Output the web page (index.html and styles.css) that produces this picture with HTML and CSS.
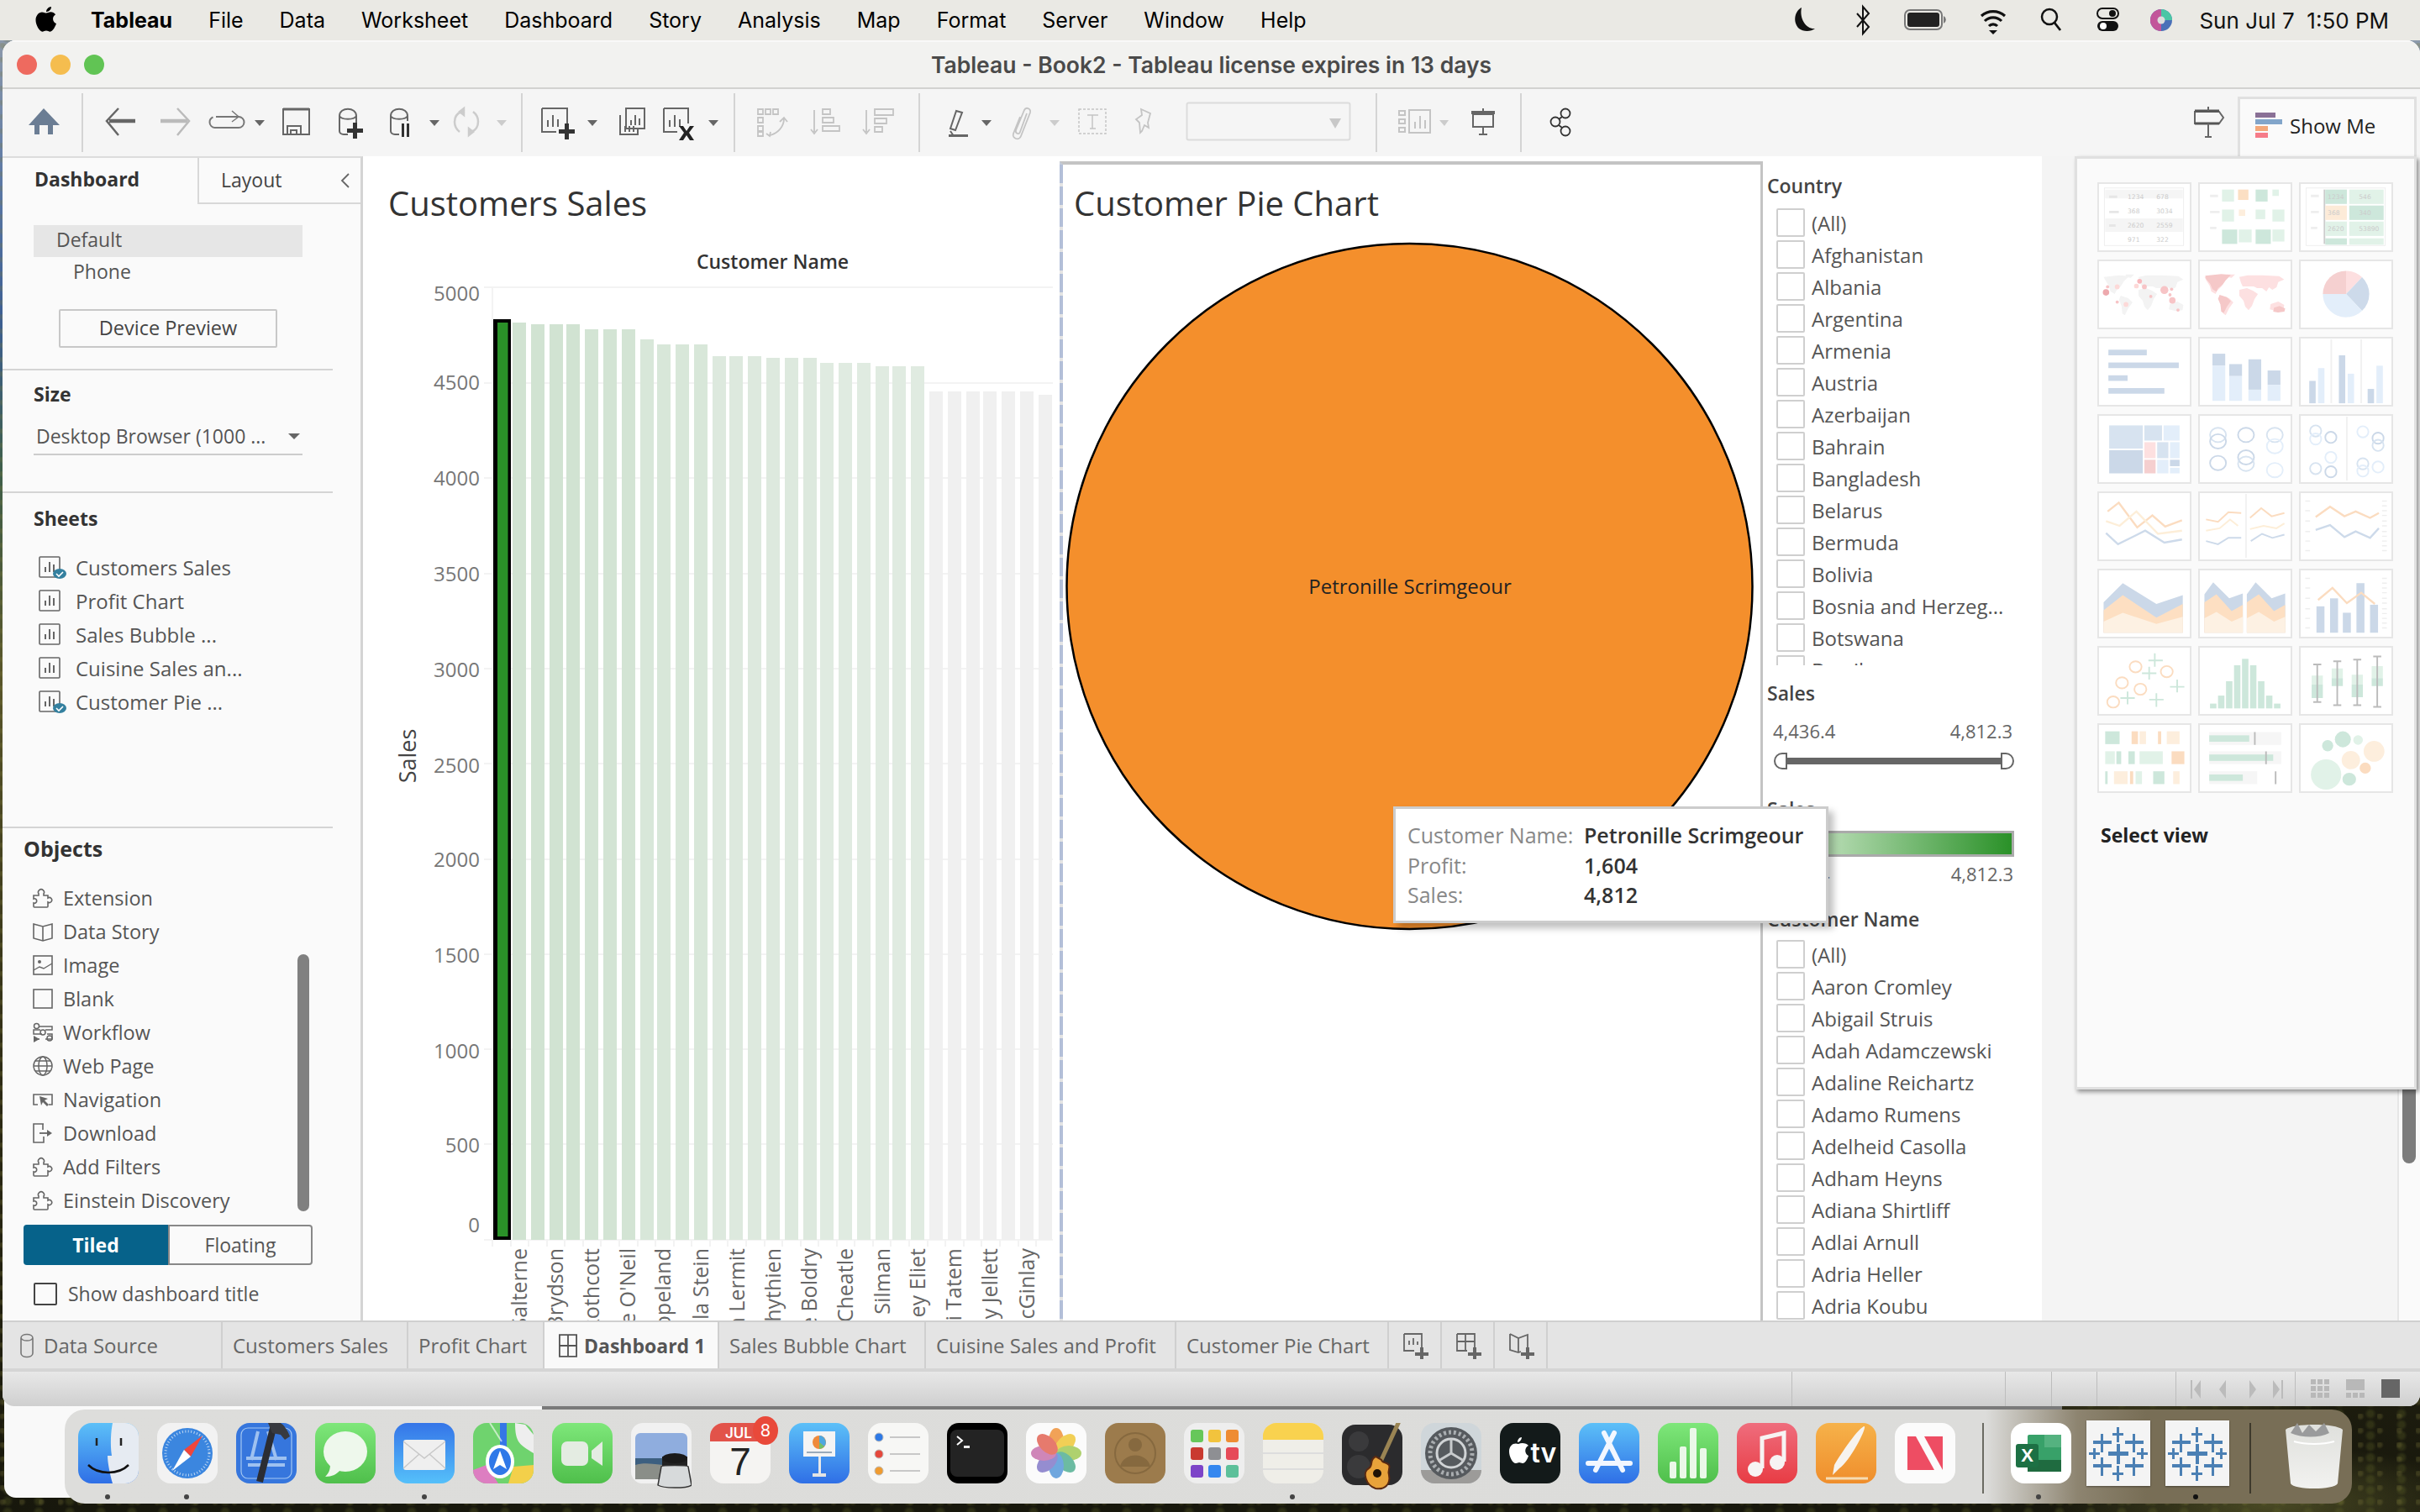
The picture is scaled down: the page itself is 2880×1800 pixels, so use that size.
FILE: index.html
```html
<!DOCTYPE html>
<html lang="en">
<head>
<meta charset="utf-8">
<title>Tableau - Book2</title>
<link rel="stylesheet" href="styles.css">
</head>
<body>
<svg class="defs" width="0" height="0" aria-hidden="true">
  <defs>
    <linearGradient id="gBlue" x1="0" y1="0" x2="0" y2="1"><stop offset="0" stop-color="#5cc0f8"/><stop offset="1" stop-color="#2f6fe6"/></linearGradient>
    <linearGradient id="gBlueUp" x1="0" y1="0" x2="0" y2="1"><stop offset="0" stop-color="#3575e8"/><stop offset="1" stop-color="#55c0fa"/></linearGradient>
    <linearGradient id="gGreen" x1="0" y1="0" x2="0" y2="1"><stop offset="0" stop-color="#7ee77a"/><stop offset="1" stop-color="#4fbf4b"/></linearGradient>
    <linearGradient id="gRed" x1="0" y1="0" x2="0" y2="1"><stop offset="0" stop-color="#ef6d7d"/><stop offset="1" stop-color="#e83c44"/></linearGradient>
    <linearGradient id="gOrange" x1="0" y1="0" x2="0" y2="1"><stop offset="0" stop-color="#f6b24a"/><stop offset="1" stop-color="#ef8e2c"/></linearGradient>
    <linearGradient id="gGlass" x1="0" y1="0" x2="0" y2="1"><stop offset="0" stop-color="#dfe0dc"/><stop offset="1" stop-color="#f2f2f0"/></linearGradient>
    <symbol id="sheet" viewBox="0 0 26 26"><rect x="1" y="1" width="24" height="24" fill="none" stroke="#666" stroke-width="1.6" rx="1"/><path d="M8 19v-6M13 19V7M18 19v-9" stroke="#666" stroke-width="2" fill="none"/></symbol>
    <symbol id="puzzle" viewBox="0 0 24 24"><path d="M1 9h6V7a3.5 3.5 0 1 1 6 0v2h5v3a3 3 0 1 1 0 5v5a1 1 0 0 1-1 1H2a1 1 0 0 1-1-1v-4a2.700 2.700 0 1 0 0-5z" fill="none" stroke="#666" stroke-width="1.6"/></symbol>
    <symbol id="cross" viewBox="0 0 76 78"><g fill="#4b80b4"><rect x="36" y="8" width="3" height="18"/><rect x="31" y="15" width="13" height="3"/><rect x="36" y="54" width="3" height="18"/><rect x="31" y="62" width="13" height="3"/><rect x="36" y="28" width="4" height="24"/><rect x="26" y="37" width="24" height="5"/><rect x="17" y="16" width="3" height="22"/><rect x="8" y="24" width="22" height="4"/><rect x="55" y="16" width="3" height="22"/><rect x="46" y="24" width="22" height="4"/><rect x="17" y="44" width="3" height="22"/><rect x="8" y="52" width="22" height="4"/><rect x="55" y="44" width="3" height="22"/><rect x="46" y="52" width="22" height="4"/><rect x="8" y="33" width="3" height="13"/><rect x="3" y="38" width="13" height="3"/><rect x="65" y="33" width="3" height="13"/><rect x="60" y="38" width="13" height="3"/></g></symbol>
    <symbol id="world" viewBox="0 0 100 50"><path d="M2 4l18-2 12 1-6 6-4 6-5 5-2 4-5-3-2-7-4-6zM28 1h10l-4 4-6-1zM22 26l9 3 5 5-5 7-4 8-3-2-1-9-3-7zM43 4l10-2 17 0 20 1 6 4-7 3-2 6-5 3-4-3-3 5-5-4-6 0-4-2-6 0-7 0-2-4zM43 19l9-2 7 3 6 4-4 6-3 8-4 5-4-4-2-7-5-6zM80 36l9-3 7 4-1 6-8 1-8-2z"/></symbol>
  </defs>
</svg>

<div class="desktop">
  <div class="behind"><div class="behind-line"></div></div>

  <header class="menubar">
    <svg class="apple" viewBox="0 0 28 32" aria-hidden="true"><path d="M20 1c.2 3-2.700 6.300-6 6 0-3 3-6 6-6zM14 8.600c1.500 0 3-1.300 5.500-1.300 2 0 4.200 1 5.600 3-4.500 2.600-3.800 9 .9 10.800-1 3-4 9.600-7.400 9.600-1.700 0-2.600-1.100-4.600-1.100s-3 1.100-4.600 1.100C6 30.700 1.500 22.700 1.500 17c0-5.500 3.600-9.600 7.500-9.600 2.200 0 3.600 1.200 5 1.200z" fill="#000"/></svg>
    <nav class="menu">
      <span class="menu-app">Tableau</span><span>File</span><span>Data</span><span>Worksheet</span><span>Dashboard</span><span>Story</span><span>Analysis</span><span>Map</span><span>Format</span><span>Server</span><span>Window</span><span>Help</span>
    </nav>
    <svg class="status-icons" viewBox="2120 0 480 48" aria-hidden="true">
      <path d="M2144 9c-8 4-11 17-3 25 5 4 14 4 19 0-10 1-19-11-16-25z" fill="#111"/>
      <path d="M2210 16l14 16-7 8V8l7 8-14 16" fill="none" stroke="#111" stroke-width="2"/>
      <rect x="2267" y="12" width="44" height="23" rx="6" fill="none" stroke="#777" stroke-width="2"/><rect x="2270" y="15" width="38" height="17" rx="3" fill="#222"/><path d="M2313 19v9a5 5 0 0 0 0-9z" fill="#777"/>
      <path d="M2358 19a21 21 0 0 1 28 0M2362 25a14 14 0 0 1 20 0M2367 31a7 7 0 0 1 10 0" fill="none" stroke="#111" stroke-width="3.200"/><path d="M2372 41l-5-5h10z" fill="#111"/>
      <circle cx="2439" cy="20" r="9" fill="none" stroke="#111" stroke-width="2.500"/><path d="M2445 27l7 9" stroke="#111" stroke-width="2.800"/>
      <rect x="2496" y="10" width="25" height="12" rx="6" fill="none" stroke="#111" stroke-width="2"/><circle cx="2514" cy="16" r="4" fill="#111"/><rect x="2496" y="25" width="25" height="12" rx="6" fill="#111"/><circle cx="2503" cy="31" r="4" fill="#fff"/>
      <circle cx="2572" cy="24" r="13" fill="#4a70b8"/><path d="M2572 11a13 13 0 0 1 13 13h-13z" fill="#4bc6a5"/><path d="M2559 24a13 13 0 0 1 13-13v26a13 13 0 0 1-13-13z" fill="#c2559a"/><circle cx="2572" cy="24" r="4.500" fill="#ddd"/>
    </svg>
    <span class="clock">Sun Jul 7&nbsp; 1:50 PM</span>
  </header>

  <main class="window">
    <div class="titlebar">
      <div class="lights"><i class="light red"></i><i class="light yellow"></i><i class="light green"></i></div>
      <h1 class="title">Tableau - Book2 - Tableau license expires in 13 days</h1>
    </div>

    <div class="toolbar">
      <svg class="tb-group w96" viewBox="3 107 96 79" aria-hidden="true"><path d="M52 130l19 20h-8v11h-6v-11H47v11h-6v-11h-7z" fill="#6b7d94"/></svg>
      <svg class="tb-group w523" viewBox="99 107 523 79" aria-hidden="true">
        <g fill="none" stroke="#666" stroke-width="2.500"><path d="M141 130l-14 15 14 17"/><path d="M130 145h31" stroke-width="4.500"/></g>
        <g fill="none" stroke="#bbb" stroke-width="2.500"><path d="M211 130l14 15-14 17"/><path d="M191 145h32" stroke-width="4.500"/></g>
        <g fill="none" stroke="#777" stroke-width="2"><path d="M257 140h27a6.500 6.500 0 1 1 0 13h-28a6.500 6.500 0 0 1-6.500-6.500c0-3 1.500-5 4-6"/><path d="M276 133l8 7-8 6" stroke-width="1.500"/></g>
        <path d="M303 144h12l-6 7z" fill="#666"/>
        <g fill="none" stroke="#666" stroke-width="2"><path d="M337 131h31v30h-31z"/><path d="M337 131h31" stroke-width="3"/><path d="M342 161v-10h16v10M346 161v-5h7v5"/></g>
        <g fill="none" stroke="#666" stroke-width="2"><path d="M404 139c0-11 20-11 20 0v11M404 139v18c0 2 2 4 5 4h5M404 139c2 5 18 5 20 0"/></g>
        <path d="M420 147h5v7h7v5h-7v7h-5v-7h-7v-5h7z" fill="#333"/>
        <g fill="none" stroke="#666" stroke-width="2"><path d="M465 139c0-11 20-11 20 0v6M465 139v18c0 2 2 4 5 4h5M465 139c2 5 18 5 20 0"/></g>
        <path d="M478 148h3v16h-3zM484 148h3v16h-3z" fill="#333"/>
        <path d="M511 144h12l-6 7z" fill="#666"/>
        <g fill="none" stroke="#ccc" stroke-width="2.500"><path d="M563 134a15 15 0 0 1 6 12M547 158a15 15 0 0 1-6-12c0-6 3-10 8-12"/><path d="M552 130v8l-5-4zM558 162v-8l5 4z" fill="#ccc"/><path d="M569 146c0 6-3 10-8 12"/></g>
        <path d="M591 144h12l-6 7z" fill="#ccc"/>
      </svg>
      <svg class="tb-group w253" viewBox="622 107 253 79" aria-hidden="true">
        <g fill="none" stroke="#666" stroke-width="2"><path d="M645 130h30v20M645 130v28h17"/><path d="M652 152v-8M658 152v-14M664 152v-9"/></g>
        <path d="M672 148h5v7h7v5h-7v7h-5v-7h-7v-5h7z" fill="#333"/>
        <path d="M699 144h12l-6 7z" fill="#666"/>
        <g fill="none" stroke="#666" stroke-width="2"><path d="M745 130h22v24h-22zM738 138v23h21v-7"/><path d="M751 150v-6M756 150v-12M761 150v-8M744 158v-7M749 158v-7M754 158v-7"/></g>
        <g fill="none" stroke="#666" stroke-width="2"><path d="M790 130h29v18M790 130v28h16"/><path d="M797 152v-8M803 152v-14M809 152v-9"/></g>
        <path d="M808 151h5l4 6 4-6h5l-6 8 6 9h-5l-4-6-4 6h-5l6-9z" fill="#222"/>
        <path d="M843 144h12l-6 7z" fill="#666"/>
      </svg>
      <svg class="tb-group w220" viewBox="875 107 220 79" aria-hidden="true">
        <g fill="none" stroke="#c4c4c4" stroke-width="1.800"><path d="M902 131h6v6h-6zM911 131h6v6h-6zM920 131h6v6h-6zM902 141h6v6h-6zM902 151h6v6h-6zM902 158h6v5h-6z"/><path d="M933 142c0 10-7 17-16 20M912 160l4 3 1-5"/><path d="M928 146l5-5 4 5"/></g>
        <g fill="none" stroke="#c4c4c4" stroke-width="1.800"><path d="M969 132v26M965 155l4 5 4-5M979 131h9v6h-9zM979 141h13v6h-13zM979 151h20v6h-20z"/></g>
        <g fill="none" stroke="#c4c4c4" stroke-width="1.800"><path d="M1031 132v26M1027 155l4 5 4-5M1041 131h22v7h-22zM1041 142h14v6h-14zM1041 152h9v6h-9z"/></g>
      </svg>
      <svg class="tb-group w544" viewBox="1095 107 544 79" aria-hidden="true">
        <path d="M1138 133l7 2-8 21-6-2z" fill="none" stroke="#666" stroke-width="2"/><path d="M1131 157l4 6M1129 162h23" stroke="#666" stroke-width="2"/><path d="M1129 161h23v3h-23z" fill="#666"/>
        <path d="M1168 144h12l-6 7z" fill="#666"/>
        <path d="M1222 136l-8 22c-1 4-6 2-5-2l10-24c2-4 8-2 7 3l-11 28c-2 6-11 3-9-3l8-20" fill="none" stroke="#c4c4c4" stroke-width="1.800"/>
        <path d="M1249 144h12l-6 7z" fill="#ccc"/>
        <rect x="1284" y="131" width="32" height="29" fill="none" stroke="#c4c4c4" stroke-width="1.500" stroke-dasharray="3 2"/><path d="M1294 138h13M1300 138v16M1297 154h7" fill="none" stroke="#c4c4c4" stroke-width="1.500"/>
        <path d="M1358 131l11 5-3 11 1 6-5-3-3 7-2 2-1-12-4-4 7-5z" fill="none" stroke="#c4c4c4" stroke-width="1.800"/>
        <rect x="1412.500" y="123.500" width="194" height="44" rx="2" fill="#f5f5f5" stroke="#dcdcdc" stroke-width="2"/>
        <path d="M1582 142h14l-7 12z" fill="#c8c8c8"/>
      </svg>
      <svg class="tb-group w172" viewBox="1639 107 172 79" aria-hidden="true">
        <g fill="none" stroke="#c4c4c4" stroke-width="2"><path d="M1665 133h7v5h-7zM1665 143h7v5h-7zM1665 153h7v5h-7z"/><path d="M1677 132h25v27h-25z"/><path d="M1684 154v-8M1690 154v-15M1696 154v-10"/></g>
        <path d="M1713 144h11l-5 7z" fill="#ccc"/>
        <path d="M1751 133h28v4h-28z" fill="#666"/><path d="M1765 130v3M1765 152v10M1760 161h10" stroke="#666" stroke-width="2"/><path d="M1753 137h24v15h-24z" fill="none" stroke="#666" stroke-width="2"/>
      </svg>
      <svg class="tb-group w60" viewBox="1811 107 60 79" aria-hidden="true"><g fill="none" stroke="#333" stroke-width="1.800"><circle cx="1863" cy="136" r="5.500"/><circle cx="1851" cy="146" r="5.500"/><circle cx="1863" cy="157" r="5.500"/><path d="M1859 140l-4 3M1855 150l4 3"/></g></svg>
      <div class="tb-spacer"></div>
      <svg class="tb-guide" viewBox="0 0 40 40" aria-hidden="true"><path d="M2 6h29l5 7-5 7H2z" fill="none" stroke="#666" stroke-width="2"/><path d="M2 5h29M2 20h29" stroke="#555" stroke-width="3"/><path d="M18 0v5M18 20v16M14 36h8" stroke="#666" stroke-width="2"/></svg>
      <div class="showme-tab">
        <svg class="showme-icon" viewBox="0 0 32 30" aria-hidden="true"><rect width="24" height="6" fill="#8a7096"/><rect y="8" width="32" height="6" fill="#82a5ca"/><rect y="16" width="15" height="6" fill="#f4a87a"/><rect y="24" width="15" height="6" fill="#f67c89"/></svg>
        <span>Show Me</span>
      </div>
    </div>

    <div class="workspace">
      <aside class="sidebar">
        <div class="side-tabs">
          <div class="side-tab active">Dashboard</div>
          <div class="side-tab">Layout<svg class="chev" viewBox="0 0 12 18" aria-hidden="true"><path d="M10 1L2 9l8 8" fill="none" stroke="#666" stroke-width="1.800"/></svg></div>
        </div>
        <section class="sec sec-device">
          <div class="device-row selected">Default</div>
          <div class="device-row indent">Phone</div>
          <div class="device-btn">Device Preview</div>
        </section>
        <section class="sec sec-size">
          <h2 class="sec-title">Size</h2>
          <div class="select"><span>Desktop Browser (1000 ...</span><i class="caret"></i></div>
        </section>
        <section class="sec sec-sheets">
          <h2 class="sec-title">Sheets</h2>
          <ul class="sheet-list">
            <li><span class="sheet-ico"><svg><use href="#sheet"/></svg><svg class="used" viewBox="0 0 16 12" aria-hidden="true"><ellipse cx="8" cy="6" rx="8" ry="6" fill="#34809f"/><path d="M4 6l3 3 5-5" fill="none" stroke="#fff" stroke-width="1.600"/></svg></span>Customers Sales</li>
            <li><span class="sheet-ico"><svg><use href="#sheet"/></svg></span>Profit Chart</li>
            <li><span class="sheet-ico"><svg><use href="#sheet"/></svg></span>Sales Bubble ...</li>
            <li><span class="sheet-ico"><svg><use href="#sheet"/></svg></span>Cuisine Sales an...</li>
            <li><span class="sheet-ico"><svg><use href="#sheet"/></svg><svg class="used" viewBox="0 0 16 12" aria-hidden="true"><ellipse cx="8" cy="6" rx="8" ry="6" fill="#34809f"/><path d="M4 6l3 3 5-5" fill="none" stroke="#fff" stroke-width="1.600"/></svg></span>Customer Pie ...</li>
          </ul>
        </section>
        <section class="sec-objects">
          <h2 class="obj-title">Objects</h2>
          <div class="obj-clip">
            <ul class="obj-list">
              <li><svg viewBox="0 0 24 24"><path d="M12 3L3 22M12 3l9 19" fill="none" stroke="#666" stroke-width="1.600"/></svg>Ask Data</li>
              <li><svg><use href="#puzzle"/></svg>Extension</li>
              <li><svg viewBox="0 0 24 24"><path d="M1 3l11 3 11-3v17l-11 3-11-3zM12 6v17" fill="none" stroke="#666" stroke-width="1.600"/></svg>Data Story</li>
              <li><svg viewBox="0 0 24 24"><rect x="1" y="1" width="22" height="22" fill="none" stroke="#666" stroke-width="1.600"/><circle cx="8" cy="8" r="2" fill="#666"/><path d="M1 18l7-4 5 2 10-6" fill="none" stroke="#666" stroke-width="1.400"/></svg>Image</li>
              <li><svg viewBox="0 0 24 24"><rect x="1" y="1" width="22" height="22" fill="none" stroke="#666" stroke-width="1.600"/></svg>Blank</li>
              <li><svg viewBox="0 0 24 24"><g fill="none" stroke="#666" stroke-width="1.500"><circle cx="4.500" cy="4.500" r="3"/><path d="M8 5h15v4H15M9 9H1v5h10M17 14h6v6h-8M8 20H1"/><circle cx="12" cy="12" r="3"/><circle cx="20" cy="19" r="3"/></g><path d="M1 16l7 4-7 4z" fill="#666"/></svg>Workflow</li>
              <li><svg viewBox="0 0 24 24"><g fill="none" stroke="#666" stroke-width="1.500"><circle cx="12" cy="12" r="11"/><ellipse cx="12" cy="12" rx="5" ry="11"/><path d="M1 12h22M3 6h18M3 18h18"/></g></svg>Web Page</li>
              <li><svg viewBox="0 0 24 24"><path d="M6 18H1V6h22v12h-4" fill="none" stroke="#666" stroke-width="1.600"/><path d="M8 8l10 3-4 2 5 5-2 2-5-5-2 4z" fill="#666"/></svg>Navigation</li>
              <li><svg viewBox="0 0 24 24"><path d="M12 1H1v22h12v-7M13 1l-1 0v7" fill="none" stroke="#666" stroke-width="1.600"/><path d="M8 12h11" stroke="#666" stroke-width="1.800"/><path d="M17 8l6 4-6 4z" fill="#666"/></svg>Download</li>
              <li><svg><use href="#puzzle"/></svg>Add Filters</li>
              <li><svg><use href="#puzzle"/></svg>Einstein Discovery</li>
            </ul>
            <div class="obj-scroll"></div>
          </div>
          <div class="seg"><span class="seg-on">Tiled</span><span class="seg-off">Floating</span></div>
          <label class="show-title"><i class="box-dark"></i>Show dashboard title</label>
        </section>
      </aside>

      <div class="dashboard">
        <section class="sheet-bars">
          <h2 class="viz-title">Customers Sales</h2>
          <div class="field-label">Customer Name</div>
          <svg class="bar-chart" viewBox="432 330 828 1242" role="img">
            <g class="grid">
              <path d="M586 342v1134"/>
              <path d="M576 342h677M576 456h677M576 569h677M576 683h677M576 796h677M576 909h677M576 1023h677M576 1136h677M576 1249h677M576 1362h677M576 1476h677"/>
              <path d="M586 1476v8M608 1476v8M629 1476v8M651 1476v8M672 1476v8M694 1476v8M715 1476v8M737 1476v8M759 1476v8M780 1476v8M802 1476v8M823 1476v8M845 1476v8M866 1476v8M888 1476v8M910 1476v8M931 1476v8M953 1476v8M974 1476v8M996 1476v8M1017 1476v8M1039 1476v8M1060 1476v8M1082 1476v8M1104 1476v8M1125 1476v8M1147 1476v8M1168 1476v8M1190 1476v8M1212 1476v8M1233 1476v8"/>
            </g>
            <rect x="587" y="380" width="21" height="1096" fill="#000"/>
            <rect x="592" y="384" width="12.500" height="1088" fill="#2a9128"/>
            <g fill="#d1e3d2">
              <rect x="610" y="384" width="16" height="1092"/><rect x="632" y="386" width="16" height="1090"/><rect x="654" y="386" width="16" height="1090"/><rect x="674" y="386" width="16" height="1090"/>
            </g>
            <g fill="#d3e4d4">
              <rect x="696" y="392" width="16" height="1084"/><rect x="718" y="392" width="16" height="1084"/><rect x="740" y="392" width="16" height="1084"/>
            </g>
            <g fill="#d8e7d9">
              <rect x="762" y="404" width="16" height="1072"/><rect x="782" y="410" width="16" height="1066"/><rect x="804" y="410" width="16" height="1066"/><rect x="826" y="410" width="16" height="1066"/>
            </g>
            <g fill="#dde9de">
              <rect x="848" y="424" width="16" height="1052"/><rect x="868" y="424" width="16" height="1052"/><rect x="890" y="424" width="16" height="1052"/><rect x="912" y="426" width="16" height="1050"/><rect x="934" y="426" width="16" height="1050"/><rect x="956" y="426" width="16" height="1050"/>
            </g>
            <g fill="#e0ebe1">
              <rect x="976" y="432" width="16" height="1044"/><rect x="998" y="432" width="16" height="1044"/><rect x="1020" y="432" width="16" height="1044"/><rect x="1042" y="436" width="16" height="1040"/><rect x="1062" y="436" width="16" height="1040"/><rect x="1084" y="436" width="16" height="1040"/>
            </g>
            <g fill="#f0f0f0">
              <rect x="1106" y="466" width="16" height="1010"/><rect x="1128" y="466" width="16" height="1010"/><rect x="1150" y="466" width="16" height="1010"/><rect x="1170" y="466" width="16" height="1010"/><rect x="1192" y="466" width="16" height="1010"/><rect x="1214" y="466" width="16" height="1010"/><rect x="1236" y="470" width="16" height="1006"/>
            </g>
            <g class="y-labels">
              <text x="571" y="358">5000</text><text x="571" y="464">4500</text><text x="571" y="578">4000</text><text x="571" y="692">3500</text><text x="571" y="806">3000</text><text x="571" y="920">2500</text><text x="571" y="1032">2000</text><text x="571" y="1146">1500</text><text x="571" y="1260">1000</text><text x="571" y="1372">500</text><text x="571" y="1467">0</text>
            </g>
            <text class="y-title" transform="translate(495 900) rotate(-90)">Sales</text>
            <g class="x-labels">
              <text transform="translate(627 1486) rotate(-90)">Salterne</text>
              <text transform="translate(670 1486) rotate(-90)">Brydson</text>
              <text transform="translate(713 1486) rotate(-90)">Rothcott</text>
              <text transform="translate(756 1486) rotate(-90)">e O'Neil</text>
              <text transform="translate(798 1486) rotate(-90)">Copeland</text>
              <text transform="translate(843 1486) rotate(-90)">Ila Stein</text>
              <text transform="translate(886 1486) rotate(-90)">a Lermit</text>
              <text transform="translate(929 1486) rotate(-90)">Whythien</text>
              <text transform="translate(972 1486) rotate(-90)">e Boldry</text>
              <text transform="translate(1015 1486) rotate(-90)">Cheatle</text>
              <text transform="translate(1059 1486) rotate(-90)">a Silman</text>
              <text transform="translate(1101 1486) rotate(-90)">ey Eliet</text>
              <text transform="translate(1144 1486) rotate(-90)">i Tatem</text>
              <text transform="translate(1187 1486) rotate(-90)">y Jellett</text>
              <text transform="translate(1231 1486) rotate(-90)">McGinlay</text>
            </g>
          </svg>
        </section>

        <section class="sheet-pie">
          <h2 class="viz-title">Customer Pie Chart</h2>
          <svg class="pie-chart" viewBox="1265 288 830 825" role="img">
            <circle cx="1677.500" cy="698" r="408" fill="#f48f2c" stroke="#000" stroke-width="2.500"/>
            <text x="1678" y="707" class="pie-label">Petronille Scrimgeour</text>
          </svg>
        </section>

        <section class="filters">
          <h3 class="filter-title">Country</h3>
          <ul class="check-list country">
            <li>(All)</li><li>Afghanistan</li><li>Albania</li><li>Argentina</li><li>Armenia</li><li>Austria</li><li>Azerbaijan</li><li>Bahrain</li><li>Bangladesh</li><li>Belarus</li><li>Bermuda</li><li>Bolivia</li><li>Bosnia and Herzeg...</li><li>Botswana</li><li>Brazil</li>
          </ul>
          <h3 class="filter-title t-sales">Sales</h3>
          <div class="range-vals"><span>4,436.4</span><span>4,812.3</span></div>
          <div class="slider"><i class="knob left"></i><i class="track"></i><i class="knob right"></i></div>
          <h3 class="filter-title t-legend">Sales</h3>
          <div class="legend-bar"></div>
          <div class="range-vals legend-vals"><span>4,436.4</span><span>4,812.3</span></div>
          <h3 class="filter-title t-name">Customer Name</h3>
          <ul class="check-list names">
            <li>(All)</li><li>Aaron Cromley</li><li>Abigail Struis</li><li>Adah Adamczewski</li><li>Adaline Reichartz</li><li>Adamo Rumens</li><li>Adelheid Casolla</li><li>Adham Heyns</li><li>Adiana Shirtliff</li><li>Adlai Arnull</li><li>Adria Heller</li><li>Adria Koubu</li>
          </ul>
        </section>

        <div class="tooltip">
          <div class="tip-row"><span class="tip-key">Customer Name:</span><span class="tip-val">Petronille Scrimgeour</span></div>
          <div class="tip-row"><span class="tip-key">Profit:</span><span class="tip-val">1,604</span></div>
          <div class="tip-row"><span class="tip-key">Sales:</span><span class="tip-val">4,812</span></div>
        </div>
      </div>

      <div class="gutter">
        <div class="gutter-strip"></div>
        <div class="gutter-scroll"></div>
        <aside class="showme">
          <div class="thumbs">
            <svg class="thumb" viewBox="0 0 112 83"><rect x="6" y="5" width="99" height="72" fill="none" stroke="#eee"/><path d="M7 7h97v11H7zM7 43h97v17H7z" fill="#f5f5f5"/><path d="M12 16h10M12 35h12M12 52h8" stroke="#e6e6e6" stroke-width="3"/><g class="t-txt"><text x="35" y="19">1234</text><text x="71" y="19">678</text><text x="35" y="37">368</text><text x="71" y="37">3034</text><text x="35" y="55">2620</text><text x="71" y="55">2559</text><text x="35" y="72">971</text><text x="71" y="72">322</text></g></svg>
            <svg class="thumb" viewBox="0 0 112 83"><path d="M12 15h10M12 35h12M12 55h8" stroke="#eee" stroke-width="3"/><rect x="27" y="7" width="15" height="15" fill="#e1f2e8"/><rect x="47" y="7" width="13" height="13" fill="#fbdfc3"/><rect x="69" y="7" width="15" height="15" fill="#cde7db"/><rect x="90" y="7" width="8" height="8" fill="#e1f2e8"/><rect x="27" y="32" width="15" height="15" fill="#e1f2e8"/><rect x="48" y="32" width="8" height="8" fill="#fdeedd"/><rect x="69" y="32" width="12" height="12" fill="#e1f2e8"/><rect x="90" y="32" width="15" height="15" fill="#e1f2e8"/><rect x="27" y="57" width="19" height="18" fill="#cde7db"/><rect x="48" y="57" width="16" height="16" fill="#e1f2e8"/><rect x="69" y="57" width="19" height="18" fill="#cde7db"/><rect x="90" y="57" width="15" height="15" fill="#e1f2e8"/></svg>
            <svg class="thumb" viewBox="0 0 112 83"><rect x="6" y="5" width="99" height="72" fill="none" stroke="#eee"/><path d="M12 15h10M12 35h10M12 55h8" stroke="#eee" stroke-width="3"/><rect x="28" y="7" width="2" height="68" fill="#ccc"/><rect x="30" y="7" width="27" height="18" fill="#cde7db"/><rect x="60" y="7" width="43" height="18" fill="#e1f2e8"/><rect x="30" y="27" width="27" height="18" fill="#fdebd8"/><rect x="60" y="27" width="43" height="18" fill="#cde7db"/><rect x="30" y="47" width="27" height="18" fill="#e1f2e8"/><rect x="60" y="47" width="43" height="18" fill="#e1f2e8"/><rect x="30" y="68" width="27" height="8" fill="#cde7db"/><rect x="60" y="68" width="43" height="8" fill="#e1f2e8"/><g class="t-txt"><text x="33" y="19">1234</text><text x="72" y="19">546</text><text x="33" y="39">368</text><text x="72" y="39">340</text><text x="33" y="59">2620</text><text x="72" y="59">53890</text></g></svg>

            <svg class="thumb" viewBox="0 0 112 83"><use href="#world" x="3" y="14" width="106" height="56" fill="#f3f3f3"/><g fill="#f7c4c6"><circle cx="8" cy="39" r="4" fill="#eda9ad"/><circle cx="10" cy="32" r="2"/><circle cx="22" cy="32" r="3" fill="#fdd9d8"/><circle cx="50" cy="25" r="3" fill="#f9b8bd"/><circle cx="46" cy="31" r="3" fill="#fdd9d8"/><circle cx="56" cy="32" r="3"/><circle cx="81" cy="36" r="5"/><circle cx="90" cy="35" r="2"/><circle cx="88" cy="42" r="2"/><circle cx="91" cy="49" r="4"/><circle cx="64" cy="44" r="2"/><circle cx="22" cy="51" r="2"/><circle cx="33" cy="54" r="3" fill="#fdd9d8"/><circle cx="98" cy="61" r="2"/></g></svg>
            <svg class="thumb" viewBox="0 0 112 83"><use href="#world" x="3" y="14" width="106" height="56" fill="#fde0e1"/><g fill="#f5c8c8"><path d="M6 18l20-2 12 1-6 6-4 6-6 5-2 4-5-3-3-7-5-6z"/><path d="M24 42l9 3 5 5-5 7-4 8-3-2-1-9-3-7z"/><path d="M92 58l7-2 7 3-1 4-8 1-6-1z"/></g></svg>
            <svg class="thumb" viewBox="0 0 112 83"><path d="M56 41V12a29 29 0 0 0-29 29z" fill="#f5d0d0"/><path d="M56 41V12a29 29 0 0 1 20 8z" fill="#fddfe0"/><path d="M56 41l20-21a29 29 0 0 1 0 42z" fill="#cddaea"/><path d="M56 41l20 21a29 29 0 0 1-49-21z" fill="#e3eefa"/></svg>

            <svg class="thumb" viewBox="0 0 112 83"><g fill="#cbd8e8"><rect x="11" y="14" width="48" height="7"/><rect x="11" y="30" width="88" height="7"/><rect x="11" y="46" width="24" height="7"/><rect x="11" y="62" width="70" height="7"/></g></svg>
            <svg class="thumb" viewBox="0 0 112 83"><g fill="#cbd8e8"><rect x="15" y="19" width="16" height="15"/><rect x="36" y="32" width="16" height="15"/><rect x="60" y="26" width="16" height="38"/><rect x="84" y="40" width="16" height="18"/></g><g fill="#e3eefa"><rect x="15" y="34" width="16" height="44"/><rect x="36" y="47" width="16" height="31"/><rect x="60" y="64" width="16" height="14"/><rect x="84" y="58" width="16" height="20"/></g></svg>
            <svg class="thumb" viewBox="0 0 112 83"><path d="M37.500 1v80M75 1v80" stroke="#f1f1f1" stroke-width="2"/><g fill="#cbd8e8"><rect x="10" y="53" width="8" height="28"/><rect x="47" y="21" width="8" height="60"/><rect x="83" y="63" width="8" height="18"/></g><g fill="#e3eefa"><rect x="21" y="37" width="8" height="44"/><rect x="58" y="44" width="8" height="37"/><rect x="94" y="34" width="8" height="47"/></g></svg>

            <svg class="thumb" viewBox="0 0 112 83"><rect x="12" y="12" width="42" height="29" fill="#d7e3f0"/><rect x="12" y="43" width="42" height="29" fill="#cbd8e8"/><rect x="56" y="12" width="22" height="19" fill="#d7e3f0"/><rect x="80" y="12" width="20" height="19" fill="#e3eefa"/><rect x="56" y="33" width="14" height="20" fill="#fde0e0"/><rect x="72" y="33" width="14" height="20" fill="#d7e3f0"/><rect x="88" y="33" width="12" height="20" fill="#e3eefa"/><rect x="56" y="55" width="14" height="17" fill="#f5cfcf"/><rect x="72" y="55" width="14" height="17" fill="#e3eefa"/><rect x="88" y="55" width="12" height="8" fill="#cbd8e8"/><rect x="88" y="65" width="12" height="7" fill="#e3eefa"/></svg>
            <svg class="thumb" viewBox="0 0 112 83"><g fill="none" stroke-width="2"><ellipse cx="22" cy="24" rx="10" ry="9" stroke="#d7e3f0"/><ellipse cx="22" cy="32" rx="10" ry="9" stroke="#cbd8e8"/><ellipse cx="57" cy="24" rx="10" ry="9" stroke="#cbd8e8"/><ellipse cx="93" cy="24" rx="10" ry="9" stroke="#d7e3f0"/><ellipse cx="93" cy="38" rx="10" ry="9" stroke="#e3eefa"/><ellipse cx="22" cy="59" rx="10" ry="9" stroke="#cbd8e8"/><ellipse cx="57" cy="52" rx="10" ry="9" stroke="#cbd8e8"/><ellipse cx="57" cy="60" rx="10" ry="9" stroke="#d7e3f0"/><ellipse cx="93" cy="68" rx="10" ry="9" stroke="#e3eefa"/></g></svg>
            <svg class="thumb" viewBox="0 0 112 83"><path d="M57 1v80" stroke="#f1f1f1" stroke-width="2"/><g fill="none" stroke-width="2"><ellipse cx="18" cy="19" rx="7" ry="7" stroke="#d7e3f0"/><ellipse cx="18" cy="29" rx="7" ry="7" stroke="#e3eefa"/><ellipse cx="37" cy="27" rx="7" ry="7" stroke="#cbd8e8"/><ellipse cx="37" cy="52" rx="7" ry="7" stroke="#e3eefa"/><ellipse cx="18" cy="66" rx="7" ry="7" stroke="#d7e3f0"/><ellipse cx="37" cy="70" rx="7" ry="7" stroke="#cbd8e8"/><ellipse cx="77" cy="20" rx="7" ry="7" stroke="#e3eefa"/><ellipse cx="96" cy="28" rx="7" ry="7" stroke="#cbd8e8"/><ellipse cx="96" cy="37" rx="7" ry="7" stroke="#d7e3f0"/><ellipse cx="77" cy="60" rx="7" ry="7" stroke="#d7e3f0"/><ellipse cx="77" cy="69" rx="7" ry="7" stroke="#e3eefa"/><ellipse cx="96" cy="64" rx="7" ry="7" stroke="#e3eefa"/></g></svg>

            <svg class="thumb" viewBox="0 0 112 83"><g fill="none" stroke-width="2.500"><path d="M10 23l14-11 23 31 19-15 16 14 21-8" stroke="#fbdcc0"/><path d="M8 35l17 6 21-18 27 28 30-4" stroke="#fdeed8"/><path d="M8 50l15 14 34-17 24 15 22-4" stroke="#cddaea"/></g></svg>
            <svg class="thumb" viewBox="0 0 112 83"><path d="M57 1v80" stroke="#f1f1f1" stroke-width="2"/><g fill="none" stroke-width="2"><path d="M7 33l15 3 13-12 16 1" stroke="#fbdcc0"/><path d="M7 47l17-3 13-11 10 8" stroke="#fdeed8"/><path d="M7 60l15 4 13-8h16" stroke="#cddaea"/><path d="M62 31l14-12 13 10 16-4" stroke="#fbdcc0"/><path d="M62 45l17-4 16 3 10-6" stroke="#fdeed8"/><path d="M63 60l14-9 13 5 15-4" stroke="#cddaea"/></g></svg>
            <svg class="thumb" viewBox="0 0 112 83"><path d="M5 10h6M5 22h6M5 35h6M5 48h6M5 60h6M5 72h6M101 10h6M101 16h6M101 22h6M101 28h6M101 35h6M101 41h6M101 48h6M101 54h6M101 60h6M101 66h6M101 72h6" stroke="#eee" stroke-width="1.500"/><g fill="none" stroke-width="2.500"><path d="M18 30l18-13 18 12 14-6 18 8 11-6" stroke="#fbdcc0"/><path d="M18 46l18-6 18 15 14-7 18 8 11-12" stroke="#cddaea"/></g></svg>

            <svg class="thumb" viewBox="0 0 112 83"><path d="M5 40l24-24 42 26 33-11v47H5z" fill="#cbd8e8"/><path d="M5 50l24-19 42 28 33-17v36H5z" fill="#fddfc2"/><path d="M5 64l24-11 42 14 33-9v20H5z" fill="#fdf1e3"/></svg>
            <svg class="thumb" viewBox="0 0 112 83"><path d="M5 30l11-15 20 20 17-6v49H5zM58 30l11-15 20 20 17-6v49H58z" fill="#cbd8e8"/><path d="M5 40l15-10 19 21 14-8v35H5zM58 40l15-10 19 21 14-8v35H58z" fill="#fddfc2"/><path d="M5 60l15-8 19 12 14-6v20H5zM58 60l15-8 19 12 14-6v20H58z" fill="#fdf1e3"/></svg>
            <svg class="thumb" viewBox="0 0 112 83"><path d="M5 10h6M5 22h6M5 35h6M5 48h6M5 60h6M5 72h6M101 10h6M101 16h6M101 22h6M101 28h6M101 35h6M101 41h6M101 48h6M101 54h6M101 60h6M101 66h6M101 72h6" stroke="#eee" stroke-width="1.500"/><g fill="#cbd8e8"><rect x="19" y="45" width="10" height="33"/><rect x="36" y="35" width="10" height="43"/><rect x="52" y="53" width="10" height="25"/><rect x="69" y="16" width="10" height="62"/><rect x="86" y="43" width="10" height="35"/></g><path d="M21 37l18-15 18 19 18-13 17 14" fill="none" stroke="#fbdcc0" stroke-width="2.500"/></svg>

            <svg class="thumb" viewBox="0 0 112 83"><g fill="none" stroke-width="2" stroke="#fbdcc0"><ellipse cx="45" cy="24" rx="7.500" ry="7"/><ellipse cx="84" cy="30" rx="7.500" ry="7"/><ellipse cx="28" cy="44" rx="7.500" ry="7"/><ellipse cx="51" cy="52" rx="7.500" ry="7"/><ellipse cx="17" cy="68" rx="7.500" ry="7"/></g><path d="M69 7v17M61 16h18M62 24v16M53 32h18M97 40v16M88 49h18M35 55v16M26 63h18M71 57v17M62 65h18" stroke="#cde7db" stroke-width="2" fill="none"/></svg>
            <svg class="thumb" viewBox="0 0 112 83"><g fill="#cde7db"><rect x="12" y="70" width="8" height="6"/><rect x="22" y="60" width="8" height="16"/><rect x="32" y="42" width="8" height="34"/><rect x="42" y="22" width="8" height="54"/><rect x="52" y="14" width="8" height="62"/><rect x="62" y="22" width="8" height="54"/><rect x="72" y="42" width="8" height="34"/><rect x="82" y="60" width="8" height="16"/><rect x="92" y="70" width="8" height="6"/></g></svg>
            <svg class="thumb" viewBox="0 0 112 83"><path d="M13 35h14v11H13zM38 26h14v12H38zM63 34h14v12H63zM88 23h14v15H88z" fill="#e1f2e8"/><path d="M13 46h14v17H13zM38 38h14v10H38zM63 46h14v16H63zM88 38h14v10H88z" fill="#cde7db"/><path d="M15 21h10M20 21v47M15 68h10M40 17h10M45 17v55M40 72h10M65 15h10M70 15v57M65 72h10M90 11h10M95 11v63M90 74h10" stroke="#bbb" stroke-width="2" fill="none"/></svg>

            <svg class="thumb" viewBox="0 0 112 83"><g fill="#cde7db"><rect x="7" y="8" width="18" height="16"/><rect x="21" y="33" width="6" height="16"/><rect x="36" y="33" width="8" height="16"/><rect x="7" y="58" width="3" height="16"/><rect x="67" y="58" width="14" height="16"/></g><g fill="#fbdcc0"><rect x="40" y="8" width="8" height="16"/><rect x="73" y="8" width="4" height="16"/><rect x="90" y="33" width="16" height="16"/><rect x="38" y="58" width="4" height="16"/></g><g fill="#fdeedd"><rect x="50" y="8" width="8" height="16"/><rect x="84" y="8" width="16" height="16"/><rect x="18" y="58" width="17" height="16"/><rect x="92" y="58" width="8" height="16"/></g><g fill="#e1f2e8"><rect x="7" y="33" width="12" height="16"/><rect x="50" y="33" width="29" height="16"/><rect x="45" y="58" width="8" height="16"/></g></svg>
            <svg class="thumb" viewBox="0 0 112 83"><g fill="#f6f6f6"><rect x="11" y="9" width="90" height="16"/><rect x="11" y="33" width="90" height="16"/><rect x="11" y="58" width="60" height="16"/></g><g fill="#cde7db"><rect x="11" y="13" width="50" height="8"/><rect x="11" y="37" width="80" height="8"/><rect x="11" y="62" width="42" height="8"/></g><path d="M68 9v16M82 33v16M94 58v16" stroke="#bbb" stroke-width="2"/></svg>
            <svg class="thumb" viewBox="0 0 112 83"><ellipse cx="31" cy="62" rx="19" ry="19" fill="#e1f2e8"/><ellipse cx="33" cy="26" rx="7" ry="7" fill="#cde7db"/><ellipse cx="52" cy="18" rx="10" ry="10" fill="#cde7db"/><ellipse cx="71" cy="19" rx="6" ry="6" fill="#e1f2e8"/><ellipse cx="91" cy="33" rx="13" ry="13" fill="#fdeedd"/><ellipse cx="62" cy="44" rx="11.500" ry="11.500" fill="#fdeedd"/><ellipse cx="80" cy="54" rx="7" ry="7" fill="#fbdcc0"/><ellipse cx="60" cy="68" rx="8.500" ry="8" fill="#cde7db"/></svg>
          </div>
          <div class="select-view">Select view</div>
        </aside>
      </div>
    </div>

    <div class="tabbar">
      <div class="tab w262"><svg class="tab-ico" viewBox="0 0 16 30" aria-hidden="true"><path d="M1 6c0-6 14-6 14 0v18c0 6-14 6-14 0zM1 6c2 4 12 4 14 0" fill="none" stroke="#777" stroke-width="1.600"/></svg>Data Source</div>
      <div class="tab w221">Customers Sales</div>
      <div class="tab w162">Profit Chart</div>
      <div class="tab w208 on"><svg class="tab-ico grid-ico" viewBox="0 0 24 30" aria-hidden="true"><path d="M1 1h22v28H1zM1 15h22M12 1v28" fill="none" stroke="#555" stroke-width="2"/></svg>Dashboard 1</div>
      <div class="tab w246">Sales Bubble Chart</div>
      <div class="tab w298">Cuisine Sales and Profit</div>
      <div class="tab w253b">Customer Pie Chart</div>
      <div class="tab w62"><svg class="add-ico" viewBox="0 0 32 32" aria-hidden="true"><path d="M2 2h21v18M2 2v20h12M8 15v-5M13 15V7M18 15v-4" fill="none" stroke="#666" stroke-width="1.800"/><path d="M21 18h4v6h6v4h-6v4h-4v-4h-6v-4h6z" fill="#666"/></svg></div>
      <div class="tab w62"><svg class="add-ico" viewBox="0 0 32 32" aria-hidden="true"><path d="M2 2h21v18M2 2v20h12M2 11h21M12 2v20" fill="none" stroke="#666" stroke-width="1.800"/><path d="M21 18h4v6h6v4h-6v4h-4v-4h-6v-4h6z" fill="#666"/></svg></div>
      <div class="tab w62"><svg class="add-ico" viewBox="0 0 32 32" aria-hidden="true"><path d="M2 2l10 5 11-4v16M2 2v19l10 3 3-1M12 7v17" fill="none" stroke="#666" stroke-width="1.800"/><path d="M21 18h4v6h6v4h-6v4h-4v-4h-6v-4h6z" fill="#666"/></svg></div>
    </div>

    <div class="statusbar">
      <div class="st w2130"></div>
      <div class="st w254"></div>
      <div class="st w55"></div>
      <div class="st w54"></div>
      <div class="st w94"></div>
      <div class="st w142"><svg class="pager" viewBox="0 0 110 22" aria-hidden="true"><g fill="#bbb"><path d="M0 0h2v22H0zM12 0L4 11l8 11zM42 0L34 11l8 11zM70 0l8 11-8 11zM98 0l8 11-8 11zM108 0h2v22h-2z"/></g></svg></div>
      <div class="st last"><svg class="view-mode" viewBox="0 0 106 24" aria-hidden="true"><g fill="#b8b8b8"><rect width="6" height="6"/><rect x="8" width="6" height="6"/><rect x="16" width="6" height="6"/><rect y="8" width="6" height="6"/><rect x="8" y="8" width="6" height="6"/><rect x="16" y="8" width="6" height="6"/><rect y="16" width="6" height="6"/><rect x="8" y="16" width="6" height="6"/><rect x="16" y="16" width="6" height="6"/><rect x="42" width="22" height="13"/><rect x="42" y="16" width="6" height="6"/><rect x="50" y="16" width="6" height="6"/><rect x="58" y="16" width="6" height="6"/></g><rect x="84" width="22" height="22" fill="#666"/></svg></div>
    </div>
  </main>

  <footer class="dock">
    <svg class="app" viewBox="0 0 72 72"><rect width="72" height="72" rx="16" fill="url(#gBlue)"/><path d="M41 0h15a16 16 0 0 1 16 16v40a16 16 0 0 1-16 16H41c-3-10-6-25-6-33h5C38 25 39 10 41 0z" fill="#e6ebf2"/><path d="M22 18v9M51 18v9" stroke="#222" stroke-width="2.500"/><path d="M12 50c12 12 36 12 48 0" fill="none" stroke="#111" stroke-width="2.500"/></svg>
    <svg class="app" viewBox="0 0 72 72"><rect width="72" height="72" rx="16" fill="#f2f2f2"/><circle cx="36" cy="36" r="30" fill="#3b86df"/><circle cx="36" cy="36" r="26" fill="none" stroke="#bcd6f2" stroke-width="3" stroke-dasharray="1 2.500"/><path d="M54 15L32 32l8 8z" fill="#f0463c"/><path d="M18 57l22-17-8-8z" fill="#fff"/></svg>
    <svg class="app" viewBox="0 0 72 72"><rect width="72" height="72" rx="16" fill="#3676dd"/><rect x="6" y="6" width="60" height="60" rx="8" fill="none" stroke="#a3c7f3" stroke-width="1.200"/><path d="M26 10l-8 34M38 10l10 34M12 42h48M14 50h44" stroke="#b9d4f5" stroke-width="4" fill="none" opacity=".8"/><path d="M46-2L28 70" stroke="#2b2d33" stroke-width="8"/><path d="M38 0c10-6 20 0 26 16l-6 4-5-6-10-2z" fill="#383a40"/></svg>
    <svg class="app" viewBox="0 0 72 72"><rect width="72" height="72" rx="16" fill="url(#gGreen)"/><ellipse cx="36" cy="34" rx="26" ry="24" fill="#eef8ec"/><path d="M18 50c0 8-4 12-6 14 8 0 14-3 18-8z" fill="#eef8ec"/></svg>
    <svg class="app" viewBox="0 0 72 72"><rect width="72" height="72" rx="16" fill="url(#gBlueUp)"/><rect x="11" y="20" width="50" height="36" rx="3" fill="#efefef"/><path d="M11 22l25 20 25-20M11 54l19-17M61 54L42 37" fill="none" stroke="#c8c8c8" stroke-width="1.500"/></svg>
    <svg class="app" viewBox="0 0 72 72"><rect width="72" height="72" rx="16" fill="#6fd36e"/><path d="M0 56l16-6 14 22H16A16 16 0 0 1 0 56z" fill="#dd7ec1"/><path d="M42 72l6-20 24-2v6a16 16 0 0 1-16 16z" fill="#f3d04a"/><path d="M50 0c0 24 6 26 22 36V14L62 2z" fill="#eeeeee"/><path d="M32 0h8v40h-8z" fill="#3576e6"/><path d="M20 0l14 22" stroke="#fff" stroke-width="2" opacity=".6"/><ellipse cx="32" cy="46" rx="17" ry="20" fill="#fff"/><ellipse cx="32" cy="46" rx="13" ry="16" fill="#2f78e8"/><path d="M32 33l8 22-8-5-8 5z" fill="#fff"/></svg>
    <svg class="app" viewBox="0 0 72 72"><rect width="72" height="72" rx="16" fill="url(#gGreen)"/><rect x="11" y="22" width="32" height="29" rx="7" fill="#e4ece2"/><path d="M47 33l13-11v29L47 42z" fill="#e4ece2"/></svg>
    <svg class="app" viewBox="0 0 72 78"><rect width="72" height="72" rx="14" fill="#f1f1f1"/><rect x="5" y="12" width="62" height="55" rx="6" fill="#8fadde"/><path d="M5 42h62v25H5z" fill="#3c5f80"/><path d="M5 50c20-6 40 6 62-2v19H5z" fill="#8a8e88"/><rect x="37" y="40" width="30" height="12" fill="#222"/><path d="M36 52c0-2 32-2 32 0l4 22c-6 4-34 4-40 0z" fill="#d7dadb" stroke="#333" stroke-width="1.500"/><ellipse cx="52" cy="42" rx="15" ry="6" fill="#1a1a1a"/></svg>
    <div class="cal"><svg class="app" viewBox="0 0 72 72"><rect width="72" height="72" rx="16" fill="#f5f4f2"/><path d="M0 16A16 16 0 0 1 16 0h40a16 16 0 0 1 16 16v6H0z" fill="#e2534a"/><text x="34" y="18" class="cal-mon">JUL</text><text x="36" y="62" class="cal-day">7</text></svg><span class="badge">8</span></div>
    <svg class="app" viewBox="0 0 72 72"><rect width="72" height="72" rx="16" fill="url(#gBlue)"/><rect x="17" y="10" width="38" height="30" fill="#f4f4f4"/><circle cx="36" cy="23" r="8" fill="#ef8a3b"/><path d="M36 23V15a8 8 0 0 1 6 13z" fill="#4ea7e0"/><path d="M36 23l6 5a8 8 0 0 1-6 3z" fill="#6ec06a"/><path d="M21 35h30" stroke="#9ab" stroke-width="2"/><path d="M35 40h3v22h-3z" fill="#e8e8e8"/><path d="M28 60h16v4H28z" fill="#e3e3e3"/></svg>
    <svg class="app" viewBox="0 0 72 72"><rect width="72" height="72" rx="16" fill="#f7f7f5"/><circle cx="13" cy="17" r="5" fill="#2e79e5" stroke="#bbb"/><circle cx="13" cy="37" r="5" fill="#e5483c" stroke="#bbb"/><circle cx="13" cy="57" r="5" fill="#ef9b30" stroke="#bbb"/><path d="M26 17h36M26 37h36M26 57h36" stroke="#c8c8c8" stroke-width="2"/></svg>
    <svg class="app" viewBox="0 0 72 72"><rect width="72" height="72" rx="14" fill="#000"/><rect x="4" y="8" width="64" height="56" rx="8" fill="#232323"/><path d="M12 16l6 5-6 5" fill="none" stroke="#fff" stroke-width="2"/><rect x="20" y="27" width="7" height="3" fill="#eee"/></svg>
    <svg class="app" viewBox="0 0 72 72"><rect width="72" height="72" rx="16" fill="#fbfbfb"/><g opacity=".8"><ellipse cx="36" cy="21" rx="9" ry="15" fill="#ef8d2f"/><ellipse cx="36" cy="21" rx="9" ry="15" fill="#efc52d" transform="rotate(45 36 36)"/><ellipse cx="36" cy="21" rx="9" ry="15" fill="#9dc74c" transform="rotate(90 36 36)"/><ellipse cx="36" cy="21" rx="9" ry="15" fill="#49ac8c" transform="rotate(135 36 36)"/><ellipse cx="36" cy="21" rx="9" ry="15" fill="#4e93d8" transform="rotate(180 36 36)"/><ellipse cx="36" cy="21" rx="9" ry="15" fill="#7c72c6" transform="rotate(225 36 36)"/><ellipse cx="36" cy="21" rx="9" ry="15" fill="#c56aa8" transform="rotate(270 36 36)"/><ellipse cx="36" cy="21" rx="9" ry="15" fill="#e25a4a" transform="rotate(315 36 36)"/></g></svg>
    <svg class="app" viewBox="0 0 72 72"><rect width="72" height="72" rx="16" fill="#9c7b4c"/><circle cx="36" cy="36" r="24" fill="none" stroke="#86693f" stroke-width="2"/><circle cx="36" cy="26" r="8" fill="#86693f"/><path d="M18 52c4-18 32-18 36 0" fill="#86693f"/></svg>
    <svg class="app" viewBox="0 0 72 72"><rect width="72" height="72" rx="16" fill="#eeeeee"/><g><rect x="8" y="8" width="15" height="15" rx="3" fill="#66c75a"/><rect x="29" y="8" width="15" height="15" rx="3" fill="#f2c33d"/><rect x="50" y="8" width="15" height="15" rx="3" fill="#ee8c33"/><rect x="8" y="29" width="15" height="15" rx="3" fill="#c93a30"/><rect x="29" y="29" width="15" height="15" rx="3" fill="#8e8f93"/><rect x="50" y="29" width="15" height="15" rx="3" fill="#e64a59"/><rect x="8" y="50" width="15" height="15" rx="3" fill="#7d44c8"/><rect x="29" y="50" width="15" height="15" rx="3" fill="#3587ef"/><rect x="50" y="50" width="15" height="15" rx="3" fill="#5dc09a"/></g></svg>
    <svg class="app" viewBox="0 0 72 72"><rect width="72" height="72" rx="16" fill="#efeee8"/><path d="M0 18A16 16 0 0 1 16 0h40a16 16 0 0 1 16 16v4H0z" fill="#f9d24f"/><path d="M0 36h72M0 55h72" stroke="#ddd" stroke-width="2"/></svg>
    <svg class="app" viewBox="0 0 72 84"><rect y="2" width="72" height="72" rx="16" fill="#2b2b2d"/><circle cx="20" cy="22" r="12" fill="#3a3a3c"/><circle cx="20" cy="52" r="14" fill="#3a3a3c"/><path d="M68-2l-22 48" stroke="#9a8453" stroke-width="5"/><path d="M40 40c-8 4-2 10-8 14-8 4-4 20 8 24 12 2 18-6 16-16-2-6 2-8 0-12-4-4-8-2-9-6z" fill="#e8a23a" stroke="#5a2a12" stroke-width="2"/><circle cx="42" cy="60" r="5" fill="#201205"/></svg>
    <svg class="app" viewBox="0 0 72 72"><rect width="72" height="72" rx="16" fill="#cfd6da"/><path d="M0 56h72v0a16 16 0 0 1-16 16H16A16 16 0 0 1 0 56z" fill="#9c9b99"/><circle cx="36" cy="36" r="31" fill="#565a5e"/><circle cx="36" cy="36" r="25" fill="none" stroke="#a9adb0" stroke-width="5" stroke-dasharray="3 3"/><circle cx="36" cy="36" r="17" fill="none" stroke="#d0d3d5" stroke-width="3"/><path d="M36 36V19M36 36L21 45M36 36l15 9" stroke="#c8cbcd" stroke-width="3"/></svg>
    <svg class="app" viewBox="0 0 72 72"><rect width="72" height="72" rx="16" fill="#131a1a"/><path d="M21 23c2 0 5-3 5-6-3 0-5 3-5 6zM22 25c-5-2-11 1-11 9 0 6 4 14 8 14 1.500 0 3-1 4-1s3 1 4 1c3 0 6-5 7-9-5-2-5-10 0-12-2-3-8-4-12-2z" fill="#fff"/><text x="52" y="47" class="tv">tv</text></svg>
    <svg class="app" viewBox="0 0 72 72"><rect width="72" height="72" rx="16" fill="url(#gBlue)"/><path d="M30 12l22 44M42 12L20 56M11 48h50" stroke="#f2f7ff" stroke-width="6" fill="none" stroke-linecap="round"/></svg>
    <svg class="app" viewBox="0 0 72 72"><rect width="72" height="72" rx="16" fill="url(#gGreen)"/><g fill="#eaf8e8"><rect x="14" y="46" width="8" height="20" rx="2"/><rect x="26" y="28" width="8" height="38" rx="2"/><rect x="38" y="6" width="8" height="60" rx="2"/><rect x="50" y="30" width="8" height="36" rx="2"/></g></svg>
    <svg class="app" viewBox="0 0 72 72"><rect width="72" height="72" rx="16" fill="url(#gRed)"/><path d="M30 54V18l26-6v34" fill="none" stroke="#f7f3f3" stroke-width="5"/><ellipse cx="22" cy="55" rx="9" ry="9" fill="#f7f3f3"/><ellipse cx="48" cy="47" rx="9" ry="9" fill="#f7f3f3"/></svg>
    <svg class="app" viewBox="0 0 72 72"><rect width="72" height="72" rx="16" fill="url(#gOrange)"/><path d="M58 4c2 4-18 42-30 50l-8 8 2-12C30 36 52 4 58 4z" fill="#f7f3ee"/><path d="M12 66h50" stroke="#f6dcb4" stroke-width="3"/></svg>
    <svg class="app" viewBox="0 0 72 72"><rect width="72" height="72" rx="16" fill="#fbfbfb"/><rect x="15" y="16" width="42" height="40" fill="#ee4d63"/><path d="M25 16h10l22 40H47z" fill="#fbfbfb"/></svg>
    <i class="dock-sep"></i>
    <svg class="app" viewBox="0 0 72 72"><rect width="72" height="72" rx="16" fill="#fff"/><rect x="20" y="14" width="40" height="44" rx="2" fill="#38a169"/><rect x="40" y="14" width="20" height="15" fill="#55b280"/><rect x="20" y="44" width="40" height="14" fill="#1f6b40"/><rect x="6" y="25" width="27" height="28" rx="3" fill="#1d7044"/><text x="19.500" y="46" class="xl">X</text></svg>
    <div class="tableau-app"><svg viewBox="0 0 76 78"><use href="#cross"/></svg></div>
    <div class="tableau-app second"><svg viewBox="0 0 76 78"><use href="#cross"/></svg></div>
    <i class="dock-sep trash-sep"></i>
    <svg class="app trash" viewBox="0 0 72 78"><path d="M2 8c8-8 60-8 68 0l-6 64c-4 8-52 8-56 0z" fill="url(#gGlass)"/><path d="M8 12l8-12 6 12 8-10 8 8 10-10 6 12c-12 6-32 6-46 0z" fill="#9a9b9c"/><path d="M12 22c14 4 34 4 48 0" fill="none" stroke="#fff" stroke-width="2"/></svg>
    <div class="dots"><i class="dot d1"></i><i class="dot d2"></i><i class="dot d3"></i><i class="dot d4"></i><i class="dot d5"></i><i class="dot d6"></i></div>
  </footer>
</div>
</body>
</html>
```
FILE: styles.css
```css
* { box-sizing: border-box; }
html, body { margin: 0; padding: 0; }
body { width: 2880px; height: 1800px; overflow: hidden; font-family: "Open Sans", "Noto Sans", sans-serif; color: #555; font-size: 23px; }
h1, h2, h3, ul { margin: 0; padding: 0; font-weight: normal; list-style: none; }
svg { display: block; flex: none; }
.defs { position: absolute; }

.desktop {
  position: relative; width: 2880px; height: 1800px; overflow: hidden;
  background:
    radial-gradient(circle at 3px 3px, rgba(130,125,60,.28) 2px, transparent 5px) 0 0 / 23px 17px,
    radial-gradient(circle at 9px 6px, rgba(95,100,40,.3) 3px, transparent 7px) 0 0 / 37px 13px,
    radial-gradient(ellipse 260px 70px at 2700px 1790px, #4a4a24, transparent),
    radial-gradient(ellipse 220px 90px at 2560px 1700px, #3d3a1e, transparent),
    linear-gradient(180deg, #9aa3ad 0, #5b78a5 220px, #3d5f93 380px, #3f5f4a 560px, #59562a 800px, #2c2a14 1300px, #17170c 1800px);
}
.behind { position: absolute; left: 5px; top: 1640px; width: 2449px; height: 143px; background: #f9f9f9; border-radius: 0 0 14px 14px; }
.behind-line { margin: 34px 0 0 640px; height: 4px; background: #7a7a7a; }

/* menu bar */
.menubar { position: relative; height: 48px; display: flex; align-items: center; background: #eae9e4; color: #000; font-family: Inter, "Liberation Sans", sans-serif; font-size: 25px; padding-left: 41px; }
.apple { width: 28px; height: 32px; margin-right: 39px; margin-top: -2px; }
.menu { display: flex; gap: 43px; }
.menu-app { font-weight: 700; }
.status-icons { position: absolute; left: 2120px; top: 0; width: 480px; height: 48px; }
.clock { margin-left: auto; margin-right: 37px; font-size: 26px; color: #111; }

/* window */
.window { position: relative; margin-left: 3px; width: 2877px; height: 1626px; display: flex; flex-direction: column; background: #f5f5f5; border-radius: 16px 16px 14px 14px; overflow: hidden; }
.titlebar { height: 58px; position: relative; display: flex; align-items: center; justify-content: center; background: #f2f2f0; border-bottom: 2px solid #d2d2d0; border-top: 2px solid #f9f9f8; }
.lights { position: absolute; left: 17px; top: 15px; display: flex; gap: 16px; }
.light { width: 24px; height: 24px; border-radius: 50%; display: block; }
.red { background: #ee6a5f; } .yellow { background: #f5bd4f; } .green { background: #61c454; }
.title { font-size: 26.500px; font-weight: 600; color: #4a4a4a; font-family: Inter, "Liberation Sans", sans-serif; }

.toolbar { height: 80px; display: flex; align-items: stretch; background: #f5f5f5; }
.tb-group { height: 79px; }
.w96 { width: 96px; } .w523 { width: 523px; } .w253 { width: 253px; } .w220 { width: 220px; } .w544 { width: 544px; } .w172 { width: 172px; } .w60 { width: 60px; }
.w96, .w523, .w253, .w220, .w544, .w172 { background: linear-gradient(#d4d4d4, #d4d4d4) no-repeat right center / 2px 70px; }
.tb-spacer { flex: 1; }
.tb-guide { width: 40px; height: 40px; align-self: center; margin-right: 13px; margin-top: 2px; }
.showme-tab { width: 213px; height: 71px; align-self: flex-end; display: flex; align-items: center; padding: 0 0 6px 18px; gap: 9px; background: #fafafa; border: 3px solid #e0e0e0; border-bottom: 0; color: #222; font-size: 24px; margin-right: 4px; }
.showme-icon { width: 32px; height: 30px; }

/* workspace */
.workspace { position: relative; height: 1386px; display: flex; }

.sidebar { width: 429px; flex: none; display: flex; flex-direction: column; background: #fafafa; border-right: 3px solid #d4d4d4; border-top: 2px solid #dcdcdc; }
.side-tabs { height: 55px; display: flex; }
.side-tab { display: flex; align-items: center; font-size: 23px; color: #444; }
.side-tab.active { width: 234px; padding: 0 0 5px 38px; font-weight: 700; color: #333; border-right: 2px solid #d8d8d8; }
.side-tab:not(.active) { flex: 1; padding: 0 0 2px 26px; border-bottom: 2px solid #d8d8d8; position: relative; }
.chev { width: 12px; height: 18px; position: absolute; right: 12px; top: 18px; }
.sec { border-bottom: 2px solid #d4d4d4; width: 393px; padding-left: 37px; }
.sec-device { height: 198px; padding-top: 25px; }
.device-row { width: 320px; height: 38px; line-height: 34px; padding-left: 27px; }
.device-row.selected { background: #e6e6e6; }
.device-row.indent { padding-left: 47px; }
.device-btn { width: 260px; height: 46px; margin: 24px 0 0 30px; border: 2px solid #c8c8c8; border-radius: 2px; text-align: center; line-height: 40px; color: #444; font-size: 23.500px; }
.sec-size { height: 146px; padding-top: 12px; }
.sec-title { font-size: 23px; font-weight: 700; color: #333; line-height: 32px; }
.select { width: 320px; height: 44px; margin-top: 13px; padding: 0 3px; display: flex; align-items: center; justify-content: space-between; border-bottom: 2px solid #ccc; white-space: nowrap; }
.caret { width: 0; height: 0; border-left: 7px solid transparent; border-right: 7px solid transparent; border-top: 7px solid #666; }
.sec-sheets { height: 399px; padding-top: 14px; border-bottom: 2px solid #d4d4d4; }
.sheet-list { margin-top: 22px; }
.sheet-list li { height: 40px; display: flex; align-items: center; white-space: nowrap; font-size: 24px; }
.sheet-ico { position: relative; width: 50px; padding-left: 6px; }
.sheet-ico > svg:first-child { width: 26px; height: 26px; }
.used { position: absolute; left: 23px; top: 15px; width: 16px; height: 12px; }

.sec-objects { flex: 1; display: flex; flex-direction: column; padding-left: 25px; }
.obj-title { font-size: 25px; font-weight: 700; color: #333; height: 54px; line-height: 48px; }
.obj-clip { position: relative; height: 408px; overflow: hidden; }
.obj-list { margin-top: -31px; padding-left: 11px; }
.obj-list li { height: 40px; display: flex; align-items: center; gap: 12px; white-space: nowrap; font-size: 23.500px; }
.obj-list svg { width: 24px; height: 24px; }
.obj-scroll { position: absolute; left: 326px; top: 96px; width: 14px; height: 306px; border-radius: 7px; background: #808080; }
.seg { display: flex; width: 344px; height: 48px; margin-top: 10px; }
.seg span { width: 172px; display: flex; align-items: center; justify-content: center; }
.seg-on { background: #06628a; color: #fff; font-weight: 700; border-radius: 4px 0 0 4px; }
.seg-off { border: 2px solid #888; border-radius: 0 4px 4px 0; color: #555; }
.show-title { display: flex; align-items: center; gap: 13px; margin: 18px 0 0 12px; color: #555; }
.box-dark { width: 28px; height: 27px; border: 2px solid #444; border-radius: 2px; display: block; }

/* dashboard */
.dashboard { position: relative; width: 1998px; flex: none; display: flex; background: #fff; height: 1386px; overflow: hidden; }
.sheet-bars { width: 829px; flex: none; overflow: hidden; }
.viz-title { font-size: 40px; color: #333; line-height: 48px; padding: 32px 0 0 30px; font-weight: 400; }
.field-label { height: 64px; padding-top: 33px; text-align: center; font-size: 23px; color: #333; font-weight: 600; line-height: 24px; width: 975px; }
.bar-chart { width: 828px; height: 1242px; }
.grid path { fill: none; stroke: #f3f3f3; stroke-width: 2; }
.y-labels text { text-anchor: end; font-size: 24px; fill: #777; font-family: "Open Sans", sans-serif; }
.y-title { font-size: 27px; fill: #444; text-anchor: middle; font-family: "Open Sans", sans-serif; }
.x-labels text { text-anchor: end; font-size: 25px; fill: #666; font-family: "Open Sans", sans-serif; }

.sheet-pie { position: relative; width: 837px; flex: none; margin-top: 6px; border-top: 4px solid #c4c4c4; border-right: 3px solid #c4c4c4; border-left: 4px solid #c4cbd9; }
.sheet-pie::before { content: ""; position: absolute; left: -4px; top: 0; bottom: 0; width: 4px; background: repeating-linear-gradient(180deg, #b3bfd8 0 22px, #e4e4e4 22px 26px); }
.sheet-pie .viz-title { padding: 22px 0 0 13px; }
.pie-chart { width: 830px; height: 825px; margin-top: 22px; }
.pie-label { font-size: 24px; fill: #222; text-anchor: middle; font-family: "Open Sans", sans-serif; }

.filters { width: 332px; flex: none; padding: 0 0 0 5px; overflow: hidden; }
.filter-title { font-size: 23px; font-weight: 600; color: #444; line-height: 30px; }
.filters > .filter-title:first-child { padding-top: 20px; height: 50px; }
.check-list { padding-left: 11px; overflow: hidden; }
.check-list li { height: 38px; display: flex; align-items: center; gap: 8px; white-space: nowrap; font-size: 24px; }
.check-list li::before { content: ""; width: 30px; height: 30px; border: 2px solid #cfcfcf; border-radius: 2px; flex: none; }
.country { height: 546px; margin-top: 10px; }
.t-sales { margin-top: 18px; }
.range-vals { display: flex; justify-content: space-between; width: 285px; margin: 15px 0 0 7px; font-size: 22px; color: #666; line-height: 30px; }
.slider { display: flex; align-items: center; width: 286px; height: 22px; margin: 10px 0 0 8px; }
.track { flex: 1; height: 8px; background: #666; display: block; }
.knob { width: 16px; height: 20px; border: 2px solid #666; background: #fff; display: block; }
.knob.left { border-radius: 10px 0 0 10px; }
.knob.right { border-radius: 0 10px 10px 0; }
.t-legend { margin-top: 31px; }
.legend-bar { width: 294px; height: 31px; margin-top: 11px; border: 3px solid #aaa; background: linear-gradient(90deg, #e3f3df, #2a9128); }
.legend-vals { width: 293px; margin: 5px 0 0 0; }
.t-name { margin-top: 24px; }
.names { margin-top: 8px; height: 470px; }

.tooltip { position: absolute; left: 1226px; top: 774px; width: 518px; height: 139px; padding: 13px 14px; background: #fff; border: 3px solid #ccc; box-shadow: 6px 6px 8px rgba(0,0,0,.25); font-size: 25px; }
.tip-row { display: flex; height: 35.500px; line-height: 36px; white-space: nowrap; }
.tip-key { width: 210px; color: #888; }
.tip-val { color: #333; font-weight: 600; }

/* right gutter + show me */
.gutter { position: relative; flex: 1; background: #f4f4f4; }
.gutter-strip { position: absolute; left: 423px; top: 0; bottom: 0; right: 0; background: #fafafa; border-left: 2px solid #e6e6e6; }
.gutter-scroll { position: absolute; left: 429px; top: 0; width: 16px; height: 1199px; background: #7c7c7c; border-radius: 0 0 8px 8px; }
.showme { position: relative; margin-left: 39px; width: 407px; height: 1111px; background: #fafafa; border: 3px solid #e0e0e0; box-shadow: 3px 3px 5px rgba(0,0,0,.4); }
.thumbs { display: grid; grid-template-columns: repeat(3, 112px); grid-auto-rows: 83px; gap: 9px 8px; padding: 28px 0 0 24px; }
.thumb { width: 112px; height: 83px; background: #fff; border: 2px solid #e6e6e6; }
.t-txt text { font-size: 8px; fill: #ccc; font-family: "DejaVu Sans", sans-serif; }
.select-view { margin: 34px 0 0 28px; font-size: 23px; font-weight: 700; color: #222; }

/* tabs */
.tabbar { height: 61px; display: flex; background: #e4e4e4; border-top: 2px solid #cfcfcf; border-bottom: 4px solid #d5d5d5; }
.tab { display: flex; align-items: center; padding-left: 12px; gap: 8px; font-size: 24px; color: #666; border-right: 2px solid #cfcfcf; white-space: nowrap; }
.w262 { width: 262px; padding-left: 21px; } .w221 { width: 221px; } .w162 { width: 162px; } .w208 { width: 208px; } .w246 { width: 246px; } .w298 { width: 298px; } .w253b { width: 253px; } .w62 { width: 63px; padding-left: 16px; }
.tab.on { background: #f9f9f9; font-weight: 700; color: #555; padding-left: 17px; font-size: 23px; }
.tab-ico { width: 16px; height: 30px; margin-right: 4px; }
.grid-ico { width: 22px; height: 28px; margin-right: 0; }
.add-ico { width: 32px; height: 32px; }

.statusbar { height: 41px; display: flex; background: linear-gradient(180deg, #e8e8e8, #cfcfcf); }
.st { border-right: 1px solid #bdbdbd; display: flex; align-items: center; }
.w2130 { width: 2130px; } .w254 { width: 254px; } .w55 { width: 55px; } .w54 { width: 54px; } .w94 { width: 94px; } .w142 { width: 142px; padding-left: 17px; }
.st.last { flex: 1; border: 0; padding-left: 18px; }
.pager { width: 110px; height: 22px; }
.view-mode { width: 106px; height: 24px; }

/* dock */
.dock { position: absolute; left: 77px; top: 1678px; width: 2722px; height: 112px; display: flex; align-items: flex-start; gap: 22px; padding: 16px 0 0 16px; border-radius: 24px; background: linear-gradient(90deg, #dddddb 0, #dcdcda 84%, #8d8470 88%, #786e56 91%, #786e56 100%); }
.app { width: 72px; height: auto; }
.cal { position: relative; width: 72px; height: 72px; }
.cal-mon { font: 600 17px "Inter", sans-serif; fill: #fff; text-anchor: middle; }
.cal-day { font: 300 46px "Liberation Sans", sans-serif; fill: #222; text-anchor: middle; }
.badge { position: absolute; right: -9px; top: -8px; width: 30px; height: 34px; border-radius: 50%; background: #e9493a; color: #fff; font: 20px/34px "Inter", sans-serif; text-align: center; }
.tv { font: 600 32px "Inter", sans-serif; fill: #fff; text-anchor: middle; }
.xl { font: 700 22px "Liberation Sans", sans-serif; fill: #fff; text-anchor: middle; }
.dock-sep { width: 2px; height: 84px; background: #6a6a62; margin: 0 10px; display: block; }
.tableau-app { width: 76px; height: 78px; margin-top: -3px; margin-left: -4px; background: #f4f4f4; box-shadow: 0 1px 2px rgba(0,0,0,.4); }
.tableau-app svg { width: 76px; height: 78px; }
.trash-sep { background: #3e3a2c; margin: 0 5px 0 2px; }
.trash { margin-left: 12px; }
.dots { position: absolute; inset: 0; pointer-events: none; }
.dot { position: absolute; top: 101px; width: 6px; height: 6px; border-radius: 50%; background: #444; }
.d1 { left: 48px; } .d2 { left: 142px; } .d3 { left: 425px; } .d4 { left: 1458px; } .d5 { left: 2346px; } .d6 { left: 2533px; background: #111; }
```
